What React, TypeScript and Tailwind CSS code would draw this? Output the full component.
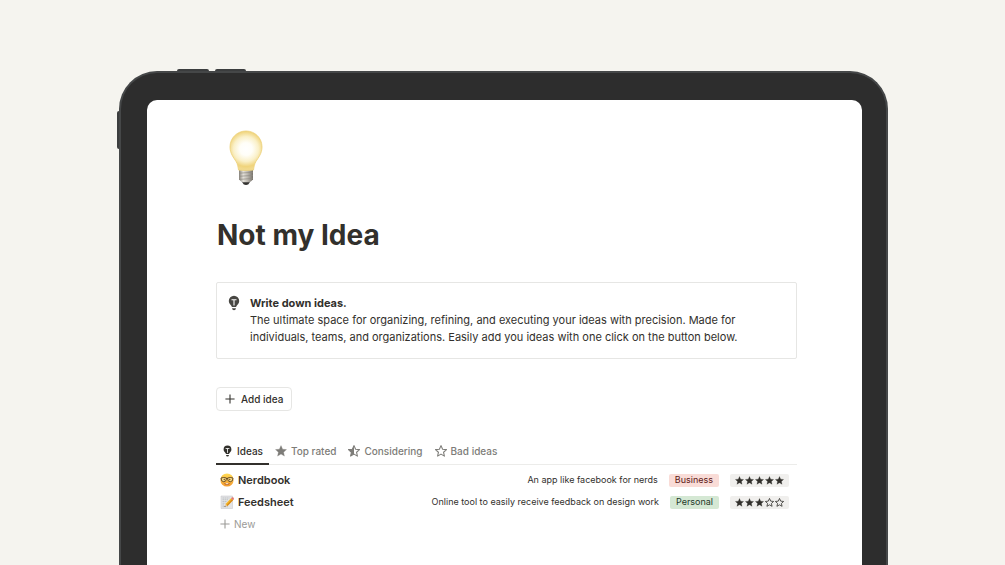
import clsx from "clsx";

const STAR =
  "M10 1l2.700 6 6.500.7-4.900 4.400 1.400 6.400L10 15.200l-5.700 3.300 1.400-6.400L.8 7.700 7.300 7z";

const TABS = [
  { name: "Ideas", icon: "idea" },
  { name: "Top rated", icon: "full" },
  { name: "Considering", icon: "half" },
  { name: "Bad ideas", icon: "empty" },
];

const IDEAS = [
  {
    name: "Nerdbook",
    Icon: NerdIcon,
    description: "An app like facebook for nerds",
    tag: "Business",
    tagClass: "bg-[#f9dcd7] text-[#5d1715]",
    rating: 5,
  },
  {
    name: "Feedsheet",
    Icon: MemoIcon,
    description: "Online tool to easily receive feedback on design work",
    tag: "Personal",
    tagClass: "bg-[#d5e8d4] text-[#1c3829]",
    rating: 3,
  },
];

function BulbPicture() {
  return (
    <svg viewBox="0 0 34 56" className="h-14 w-[34px]" aria-hidden="true">
      <defs>
        <radialGradient
          id="glass"
          cx="17"
          cy="19"
          r="25"
          gradientUnits="userSpaceOnUse"
        >
          <stop offset="0" stopColor="#ffffff" />
          <stop offset="0.25" stopColor="#fffef8" />
          <stop offset="0.5" stopColor="#faf0c8" />
          <stop offset="0.7" stopColor="#f0d47c" />
          <stop offset="1" stopColor="#f4e3a8" />
        </radialGradient>
        <linearGradient id="metal" x1="0" x2="1" y1="0" y2="0">
          <stop offset="0" stopColor="#85817a" />
          <stop offset="0.3" stopColor="#e4e1da" />
          <stop offset="0.6" stopColor="#bdb9b1" />
          <stop offset="1" stopColor="#77736c" />
        </linearGradient>
      </defs>
      <path d="M12.500 51h9l-2 3.200q-2.500 1.400-5 0z" fill="#343331" />
      <path
        d="M10 39.500h14v9.800q-1.500 2.600-4 2.900h-6q-2.500-.3-4-2.900z"
        fill="url(#metal)"
      />
      <path
        d="M10 43.200l14-.9M10 46.300l14-.9M10.300 49.400l13.400-.9"
        stroke="#8f8b83"
        strokeWidth="0.700"
      />
      <path
        d="M17 1C8 1 1 8 1 17c0 6.500 3.600 10.500 6.100 14.600 1.600 2.700 2 5.600 2.400 8.400q7.500 1 15 0c.4-2.800.8-5.700 2.400-8.400C29.400 27.500 33 23.500 33 17 33 8 26 1 17 1z"
        fill="url(#glass)"
        stroke="#ecd07a"
        strokeWidth="0.800"
      />
    </svg>
  );
}

function IdeaIcon({ className }: { className: string }) {
  return (
    <svg viewBox="0 0 12 16" className={className} aria-hidden="true">
      <path
        d="M6 .8A5.200 5.200 0 0 0 .8 6c0 2.300 1.500 3.500 2.500 4.700.3.400.4.900.7 1.300h4c.3-.4.4-.9.700-1.300C9.700 9.500 11.200 8.300 11.200 6A5.200 5.200 0 0 0 6 .8z"
        fill="currentColor"
      />
      <path
        d="M3.500 4.700h5M6 4.700v5.800"
        stroke="white"
        strokeWidth="1.100"
        fill="none"
      />
      <path d="M4 13.200h4q-.3 2-2 2t-2-2z" fill="currentColor" />
    </svg>
  );
}

function StarIcon({ kind, className }: { kind: string; className: string }) {
  return (
    <svg viewBox="0 0 20 20" className={className} aria-hidden="true">
      <path
        d={STAR}
        fill={kind === "full" ? "currentColor" : "none"}
        stroke="currentColor"
        strokeWidth={kind === "full" ? 0.5 : 1.8}
        strokeLinejoin="round"
      />
      {kind === "half" && (
        <path
          d="M10 1v14.200l-5.700 3.300 1.400-6.400L.8 7.700 7.300 7z"
          fill="currentColor"
        />
      )}
    </svg>
  );
}

function PlusIcon({ className }: { className: string }) {
  return (
    <svg viewBox="0 0 12 12" className={className} aria-hidden="true">
      <path
        d="M6 .5v11M.5 6h11"
        stroke="currentColor"
        strokeWidth="1.300"
      />
    </svg>
  );
}

function NerdIcon() {
  return (
    <svg viewBox="0 0 28 28" className="size-3.5 shrink-0" aria-hidden="true">
      <defs>
        <linearGradient id="face" x1="0" x2="0" y1="0" y2="1">
          <stop offset="0" stopColor="#ffdb55" />
          <stop offset="1" stopColor="#f39a2e" />
        </linearGradient>
      </defs>
      <circle cx="14" cy="14" r="13.200" fill="url(#face)" />
      <path
        d="M2 10q5.500-2 11 0 0 7.500-5.500 7.500T2 10zM15 10q5.500-2 11 0 0 7.500-5.500 7.500T15 10z"
        fill="#fbe08a"
        stroke="#5a4020"
        strokeWidth="1.800"
      />
      <path d="M13 11h2" stroke="#5a4020" strokeWidth="2" />
      <circle cx="8.500" cy="12.800" r="1.500" fill="#7a5020" />
      <circle cx="19.500" cy="12.800" r="1.500" fill="#7a5020" />
      <path d="M8 20q6 2 12 0-1.500 3.800-6 3.800T8 20z" fill="#b0581f" />
      <path d="M11.500 20.600h5v1.800h-5z" fill="#fff" />
    </svg>
  );
}

function MemoIcon() {
  return (
    <svg viewBox="0 0 28 28" className="size-3.5 shrink-0" aria-hidden="true">
      <path d="M2 2h23v25H2z" fill="#e3e4e6" stroke="#c2c3c6" />
      <path
        d="M5 6h14M5 9.500h12M5 13h9M5 16.500h6M5 20h4M5 23.500h12"
        stroke="#a9acb1"
        strokeWidth="1.200"
        strokeDasharray="3 1"
      />
      <path d="M9 24l2-6 4 4z" fill="#e8c79a" />
      <path d="M9 24l.8-2.300 1.500 1.500z" fill="#333" />
      <path d="M11 18L22 6.500l4 4L15 22z" fill="#f6b828" />
      <path d="M13 20L24 8.500l2 2L15 22z" fill="#d98a1b" />
      <path
        d="M22 6.500l1.500-1.600q2-1.400 3.400.3t.6 3.700L26 10.500z"
        fill="#e2766b"
      />
    </svg>
  );
}

function Rating({ value }: { value: number }) {
  return (
    <div
      role="img"
      aria-label={`${value} out of 5`}
      className="flex h-[13px] items-center gap-px rounded-xs bg-[#f0efed] px-[5px] text-[#32302c]"
    >
      {[1, 2, 3, 4, 5].map((n) => (
        <StarIcon
          key={n}
          kind={n <= value ? "full" : "empty"}
          className="size-[9px]"
        />
      ))}
    </div>
  );
}

export default function App() {
  return (
    <div className="flex min-h-screen flex-col bg-[#f5f4ef] pt-[71px] pl-0.5 font-['Inter',sans-serif] text-[#32302c]">
      <div className="relative mx-auto flex w-full max-w-[769px] flex-1 flex-col">
        <div className="absolute -top-0.5 left-[58px] h-2 w-8 rounded-xs bg-[#3b3d3e]" />
        <div className="absolute -top-0.5 left-24 h-2 w-[31px] rounded-xs bg-[#3b3d3e]" />
        <div className="absolute top-10 -left-0.5 h-[38px] w-2 rounded-xs bg-[#3b3d3e]" />
        <div className="relative flex flex-1 flex-col rounded-t-[38px] border-2 border-b-0 border-[#454748] bg-[#2d2d2d] pt-[27px] pr-6 pl-[26px]">
          <main className="flex-1 rounded-t-[10px] bg-white pt-[30px] pr-[65px] pb-8 pl-[69px]">
            <div className="pl-[13px]">
              <BulbPicture />
            </div>
            <h1 className="mt-8 pl-px text-[28px] leading-[34px] font-bold">
              Not my Idea
            </h1>
            <section className="mt-[30px] flex gap-2.5 rounded-xs border border-[#e6e6e4] px-[11px] py-3 text-[11px] leading-[17px]">
              <IdeaIcon className="h-4 w-3 shrink-0 text-[#484743]" />
              <div>
                <h2 className="font-bold">Write down ideas.</h2>
                <p>
                  The ultimate space for organizing, refining, and executing
                  your ideas with precision. Made for individuals, teams, and
                  organizations. Easily add you ideas with one click on the
                  button below.
                </p>
              </div>
            </section>
            <button
              type="button"
              className="mt-7 flex h-6 items-center gap-1.5 rounded-sm border border-[#e6e6e4] px-2 text-[10px] font-medium"
            >
              <PlusIcon className="size-2.5" />
              Add idea
            </button>
            <div
              role="tablist"
              className="mt-7 flex h-[26px] border-b border-[#ececea] text-[10px] font-medium"
            >
              {TABS.map(({ name, icon }, i) => (
                <button
                  key={name}
                  type="button"
                  role="tab"
                  aria-selected={i === 0}
                  className={clsx(
                    "-mb-px flex items-center gap-1 border-b-2 px-1.5",
                    i === 0
                      ? "border-[#32302c]"
                      : "border-transparent text-[#7d7c78]"
                  )}
                >
                  {icon === "idea" ? (
                    <IdeaIcon className="h-3 w-[11px]" />
                  ) : (
                    <StarIcon kind={icon} className="size-3" />
                  )}
                  {name}
                </button>
              ))}
            </div>
            <ul className="mt-1 pr-2 pl-1">
              {IDEAS.map(
                ({ name, Icon, description, tag, tagClass, rating }) => (
                  <li key={name} className="flex h-[22px] items-center gap-1">
                    <Icon />
                    <a href="#" className="text-[11px] font-semibold">
                      {name}
                    </a>
                    <div className="ml-auto flex items-center gap-[11px] text-[9px]">
                      <span>{description}</span>
                      <span
                        className={clsx(
                          "flex h-[13px] items-center rounded-xs px-1.5",
                          tagClass
                        )}
                      >
                        {tag}
                      </span>
                      <Rating value={rating} />
                    </div>
                  </li>
                )
              )}
            </ul>
            <button
              type="button"
              className="flex h-[22px] items-center gap-1 pl-1 text-[10px] text-[#9b9a97]"
            >
              <PlusIcon className="size-2.5" />
              New
            </button>
          </main>
        </div>
      </div>
    </div>
  );
}
